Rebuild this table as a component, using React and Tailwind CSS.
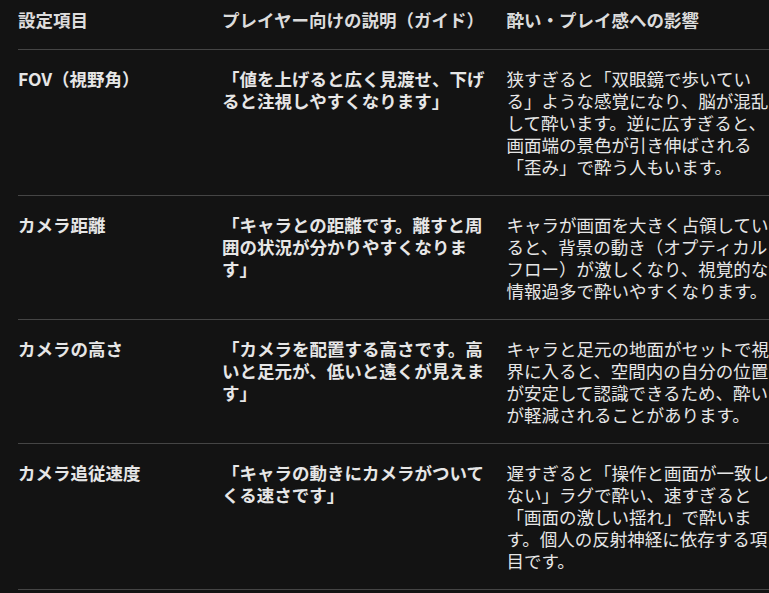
const rows = [
  {
    name: "FOV（視野角）",
    guide: "「値を上げると広く見渡せ、下げると注視しやすくなります」",
    effect:
      "狭すぎると「双眼鏡で歩いている」ような感覚になり、脳が混乱して酔います。逆に広すぎると、画面端の景色が引き伸ばされる「歪み」で酔う人もいます。",
  },
  {
    name: "カメラ距離",
    guide: "「キャラとの距離です。離すと周囲の状況が分かりやすくなります」",
    effect:
      "キャラが画面を大きく占領していると、背景の動き（オプティカルフロー）が激しくなり、視覚的な情報過多で酔いやすくなります。",
  },
  {
    name: "カメラの高さ",
    guide: "「カメラを配置する高さです。高いと足元が、低いと遠くが見えます」",
    effect:
      "キャラと足元の地面がセットで視界に入ると、空間内の自分の位置が安定して認識できるため、酔いが軽減されることがあります。",
  },
  {
    name: "カメラ追従速度",
    guide: "「キャラの動きにカメラがついてくる速さです」",
    effect:
      "遅すぎると「操作と画面が一致しない」ラグで酔い、速すぎると「画面の激しい揺れ」で酔います。個人の反射神経に依存する項目です。",
  },
];

function App() {
  return (
    <main className="h-[593px] w-[769px] overflow-hidden bg-[#131313] font-['Noto_Sans_CJK_JP',sans-serif] text-[17.5px] leading-[22px] text-[#e6e6e6]">
      <table className="ml-[18px] w-[758.5px] table-fixed border-collapse text-left">
        <thead>
          <tr className="border-b border-[#454545]">
            <th className="w-[204px] pt-[9px] pb-[18px] font-bold text-[#dcdcdc]">設定項目</th>
            <th className="w-[284.5px] pt-[9px] pb-[18px] pr-[14px] font-bold text-[#dcdcdc]">
              プレイヤー向けの説明（ガイド）
            </th>
            <th className="w-[270px] pt-[9px] pb-[18px] font-bold text-[#dcdcdc]">酔い・プレイ感への影響</th>
          </tr>
        </thead>
        <tbody>
          {rows.map((row) => (
            <tr key={row.name} className="border-b border-[#454545] align-top">
              <td className="py-[17.5px] font-bold">{row.name}</td>
              <td className="py-[17.5px] pr-[14px] font-bold">{row.guide}</td>
              <td className="py-[17.5px]">{row.effect}</td>
            </tr>
          ))}
        </tbody>
      </table>
    </main>
  );
}

export default App;
